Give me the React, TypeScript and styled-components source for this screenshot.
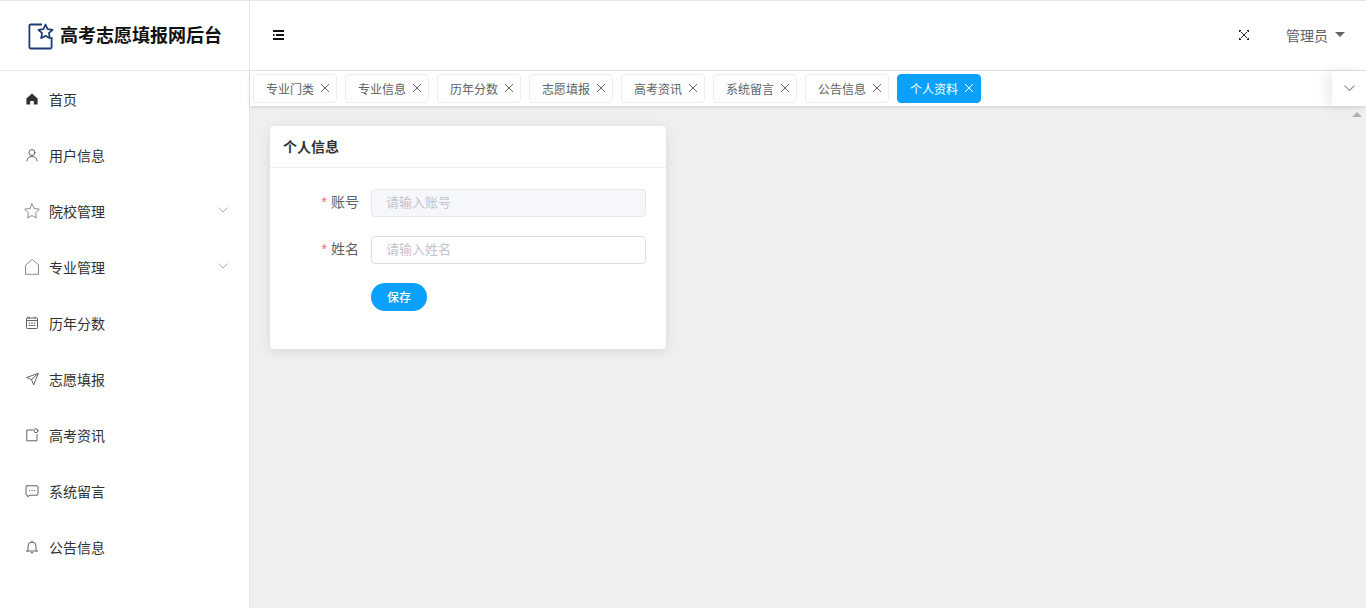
import React from "react";
import styled, { createGlobalStyle } from "styled-components";

const Global = createGlobalStyle`
  html, body { margin: 0; padding: 0; height: 100%; overflow: hidden; background: #fff; }
  body { font-family: "Liberation Sans", "Noto Sans CJK SC", sans-serif; }
  * { box-sizing: border-box; }
`;

const Page = styled.div`
  width: 1366px;
  height: 608px;
  display: flex;
  border-top: 1px solid #e6e6e6;
  overflow: hidden;
`;
const Sidebar = styled.aside`
  width: 250px;
  flex: none;
  border-right: 1px solid #e6e6e6;
  background: #fff;
  display: flex;
  flex-direction: column;
`;
const Brand = styled.div`
  height: 70px;
  flex: none;
  border-bottom: 1px solid #e6e6e6;
  display: flex;
  align-items: center;
  padding-left: 28px;
  gap: 6px;
`;
const BrandName = styled.span`
  font-size: 18px;
  font-weight: 700;
  color: #111;
  white-space: nowrap;
  margin-bottom: 4px;
`;
const Menu = styled.nav`
  display: flex;
  flex-direction: column;
`;
const MenuItem = styled.div`
  height: 56px;
  display: flex;
  align-items: center;
  position: relative;
  padding-left: 24px;
  color: #303133;
  font-size: 14px;
`;
const IconSlot = styled.span`
  width: 16px;
  height: 16px;
  display: flex;
  align-items: center;
  justify-content: center;
  margin-right: 9px;
  flex: none;
  color: #606266;
`;
const Chevron = styled.span`
  position: absolute;
  right: 21px;
  top: 24px;
  display: flex;
  color: #b4b7bd;
`;
const Body = styled.div`
  flex: 1;
  min-width: 0;
  display: flex;
  flex-direction: column;
  background: #efefef;
`;
const Header = styled.header`
  height: 70px;
  flex: none;
  background: #fff;
  border-bottom: 1px solid #e6e6e6;
  display: flex;
  align-items: center;
  justify-content: space-between;
  padding: 0 21px 2px 23px;
`;
const HeaderRight = styled.div`
  display: flex;
  align-items: center;
  gap: 37px;
  color: #606266;
  font-size: 14px;
`;
const User = styled.span`
  display: flex;
  align-items: center;
  gap: 7px;
`;
const Caret = styled.i`
  width: 0;
  height: 0;
  border-left: 5px solid transparent;
  border-right: 5px solid transparent;
  border-top: 5px solid #606266;
`;
const TabsBar = styled.div`
  height: 35px;
  flex: none;
  background: #fff;
  display: flex;
  align-items: center;
  justify-content: space-between;
  box-shadow: 0 1px 4px rgba(0, 0, 0, 0.12);
  position: relative;
`;
const Tabs = styled.div`
  display: flex;
  gap: 8px;
  padding-left: 3px;
`;
const Tab = styled.div<{ $active?: boolean }>`
  height: 29px;
  width: 84px;
  display: flex;
  align-items: center;
  justify-content: space-between;
  padding: 0 6px 1px 12px;
  font-size: 12px;
  border-radius: 4px;
  border: 1px solid ${(p) => (p.$active ? "#09a1fb" : "#ededed")};
  background: ${(p) => (p.$active ? "#09a1fb" : "#fff")};
  color: ${(p) => (p.$active ? "#fff" : "#606266")};
`;
const TabsMore = styled.div`
  width: 34px;
  height: 35px;
  display: flex;
  align-items: center;
  justify-content: center;
  background: #fff;
  box-shadow: -6px 0 10px rgba(0, 0, 0, 0.07);
  color: #909399;
`;
const Content = styled.main`
  flex: 1;
  padding: 20px;
  position: relative;
`;
const ScrollUp = styled.i`
  position: absolute;
  right: 4px;
  top: 6px;
  width: 0;
  height: 0;
  border-left: 5px solid transparent;
  border-right: 5px solid transparent;
  border-bottom: 5px solid #b0b0b0;
`;
const Card = styled.section`
  width: 396px;
  height: 223px;
  background: #fff;
  border-radius: 4px;
  box-shadow: 0 2px 12px rgba(0, 0, 0, 0.1);
`;
const CardHead = styled.div`
  height: 42px;
  border-bottom: 1px solid #ebeef5;
  display: flex;
  align-items: center;
  padding: 0 0 1px 13px;
  font-size: 14px;
  font-weight: 700;
  color: #303133;
`;
const Form = styled.form`
  padding: 21px 20px 0 0;
  display: flex;
  flex-direction: column;
  gap: 19px;
`;
const Row = styled.div`
  display: flex;
  align-items: center;
  height: 28px;
`;
const Label = styled.label`
  width: 89px;
  flex: none;
  text-align: right;
  font-size: 14px;
  color: #606266;
  margin: 0 12px 4px 0;
`;
const Star = styled.span`
  color: #f56c6c;
  margin-right: 4px;
`;
const Field = styled.input<{ $off?: boolean }>`
  width: 275px;
  height: 28px;
  border: 1px solid ${(p) => (p.$off ? "#e4e7ed" : "#dcdfe6")};
  border-radius: 4px;
  background: ${(p) => (p.$off ? "#f5f7fa" : "#fff")};
  padding: 0 15px 2px 14px;
  font: 13px "Liberation Sans", "Noto Sans CJK SC", sans-serif;
  outline: none;
  &::placeholder { color: #c0c4cc; opacity: 1; }
`;
const Save = styled.button`
  margin-left: 101px;
  width: 56px;
  height: 28px;
  border: 0;
  border-radius: 14px;
  background: #09a1fb;
  color: #fff;
  font: 500 12px "Liberation Sans", "Noto Sans CJK SC", sans-serif;
  padding: 0 0 2px;
`;

const s = { fill: "none", stroke: "currentColor", strokeWidth: 1, strokeLinecap: "round" as const, strokeLinejoin: "round" as const };

const Logo = () => (
  <svg width="26" height="28" viewBox="0 0 26 28">
    <path d="M14 2.500H2.600a1.200 1.200 0 0 0-1.200 1.200v21.600a1.200 1.200 0 0 0 1.200 1.200h19.800a1.200 1.200 0 0 0 1.200-1.200V15" fill="none" stroke="#1e3a78" strokeWidth="1.800" />
    <path d="M17.500 2.500l2.100 4.700 5 .6-3.700 3.400 1 5-4.400-2.500-4.400 2.500 1-5-3.700-3.400 5-.6z" fill="none" stroke="#1e3a78" strokeWidth="1.700" strokeLinejoin="round" />
  </svg>
);
const Home = () => (
  <svg width="14" height="14" viewBox="0 0 14 14"><path d="M7 1.600L1.400 6.600V12.500H5.200V9H8.800V12.500H12.600V6.600Z" fill="#303133" /></svg>
);
const UserIco = () => (
  <svg width="14" height="14" viewBox="0 0 14 14" {...s}><circle cx="7" cy="4.500" r="3" /><path d="M1.800 12.800c.3-2.800 2.400-4.300 5.200-4.300s4.900 1.500 5.200 4.300" /></svg>
);
const StarIco = () => (
  <svg width="16" height="16" viewBox="0 0 16 16" {...s} stroke="#8c8c8c"><path d="M8 .8l2.200 4.700 5.100.7-3.700 3.600.9 5.100L8 12.600l-4.500 2.300.9-5.100L.7 6.200l5.100-.7z" /></svg>
);
const HouseIco = () => (
  <svg width="16" height="16" viewBox="0 0 16 16" {...s} stroke="#8c8c8c"><path d="M8 .7L1.500 6.200V15.300H14.500V6.200Z" /></svg>
);
const Calendar = () => (
  <svg width="14" height="14" viewBox="0 0 14 14" {...s}>
    <rect x="1.500" y="2" width="11" height="10.500" rx=".8" /><path d="M1.500 4.500h11M4 1v1.500M10 1v1.500" />
    <path d="M4 7h1M6.500 7h1M9 7h1M4 9.500h1M6.500 9.500h1M9 9.500h1" />
  </svg>
);
const Send = () => (
  <svg width="14" height="14" viewBox="0 0 14 14" {...s}><path d="M13 1.500L1.500 5.500 6.500 7.500 8.500 12.500ZM13 1.500L6.500 7.500" /></svg>
);
const Note = () => (
  <svg width="14" height="14" viewBox="0 0 14 14" {...s}><path d="M8 2H1.800V12.800H12V6.500" /><circle cx="11" cy="2.700" r="2" /></svg>
);
const Chat = () => (
  <svg width="14" height="14" viewBox="0 0 14 14" {...s}><path d="M2 1.800H12a1 1 0 0 1 1 1v7.400a1 1 0 0 1-1 1H5L2.500 12.800V11.200H2a1 1 0 0 1-1-1V2.800a1 1 0 0 1 1-1Z" /><path d="M4.500 6.500h.3M6.900 6.500h.3M9.300 6.500h.3" /></svg>
);
const Bell = () => (
  <svg width="14" height="14" viewBox="0 0 14 14" {...s}><path d="M1.500 11H12.500M3 11V6a4 4 0 0 1 8 0v5M6 12.800h2M7 1v1" /></svg>
);
const Down = ({ w = 10 }: { w?: number }) => (
  <svg width={w} height={w * 0.6} viewBox="0 0 10 6" fill="none" stroke="currentColor" strokeWidth={1}><path d="M.5.5L5 5 9.500.5" /></svg>
);
const Close = () => (
  <svg width="10" height="10" viewBox="0 0 10 10" fill="none" stroke="currentColor" strokeWidth={1}><path d="M1 1L9 9M9 1L1 9" /></svg>
);
const Fold = () => (
  <svg width="11" height="10" viewBox="0 0 11 10" fill="none" stroke="#111" strokeWidth={1.800}><path d="M0 1H11M3 5H11M0 9H11" /><path d="M0 5H1.500" /></svg>
);
const Full = () => (
  <svg width="10" height="10" viewBox="0 0 10 10" fill="none" stroke="#222" strokeWidth={1}>
    <path d="M2 2L8 8M8 2L2 8" />
    <path d="M.5 2V.5H2M8 .5H9.500V2M.5 8V9.500H2M8 9.500H9.500V8" strokeWidth={1.400} />
  </svg>
);

const menu: { label: string; icon: React.ReactNode; sub?: boolean }[] = [
  { label: "首页", icon: <Home /> },
  { label: "用户信息", icon: <UserIco /> },
  { label: "院校管理", icon: <StarIco />, sub: true },
  { label: "专业管理", icon: <HouseIco />, sub: true },
  { label: "历年分数", icon: <Calendar /> },
  { label: "志愿填报", icon: <Send /> },
  { label: "高考资讯", icon: <Note /> },
  { label: "系统留言", icon: <Chat /> },
  { label: "公告信息", icon: <Bell /> },
];
const tabs = ["专业门类", "专业信息", "历年分数", "志愿填报", "高考资讯", "系统留言", "公告信息", "个人资料"];

export default function App() {
  return (
    <Page>
      <Global />
      <Sidebar>
        <Brand>
          <Logo />
          <BrandName>高考志愿填报网后台</BrandName>
        </Brand>
        <Menu>
          {menu.map((m) => (
            <MenuItem key={m.label}>
              <IconSlot>{m.icon}</IconSlot>
              {m.label}
              {m.sub && <Chevron><Down /></Chevron>}
            </MenuItem>
          ))}
        </Menu>
      </Sidebar>
      <Body>
        <Header>
          <Fold />
          <HeaderRight>
            <Full />
            <User>管理员<Caret /></User>
          </HeaderRight>
        </Header>
        <TabsBar>
          <Tabs>
            {tabs.map((t, i) => (
              <Tab key={t} $active={i === tabs.length - 1}>
                {t}
                <Close />
              </Tab>
            ))}
          </Tabs>
          <TabsMore><Down w={11} /></TabsMore>
        </TabsBar>
        <Content>
          <ScrollUp />
          <Card>
            <CardHead>个人信息</CardHead>
            <Form>
              <Row>
                <Label><Star>*</Star>账号</Label>
                <Field $off disabled placeholder="请输入账号" />
              </Row>
              <Row>
                <Label><Star>*</Star>姓名</Label>
                <Field placeholder="请输入姓名" />
              </Row>
              <Row>
                <Save type="button">保存</Save>
              </Row>
            </Form>
          </Card>
        </Content>
      </Body>
    </Page>
  );
}
